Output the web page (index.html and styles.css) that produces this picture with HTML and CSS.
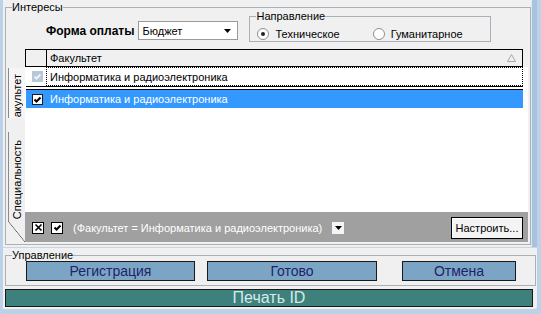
FILE: index.html
```html
<!DOCTYPE html>
<html lang="ru">
<head>
    <meta charset="UTF-8">
    <title>Интересы</title>
    <link rel="stylesheet" href="styles.css">
</head>
<body>
<div class="window">
    <div class="client">
        <div class="upper">
            <fieldset class="group interests">
                <legend>Интересы</legend>
                <div class="top-row">
                    <span class="pay-label">Форма оплаты</span>
                    <div class="combo">
                        <span>Бюджет</span>
                        <svg width="7" height="4" viewBox="0 0 7 4"><path d="M0 0h7L3.5 4z" fill="#000"/></svg>
                    </div>
                    <fieldset class="group direction">
                        <legend>Направление</legend>
                        <div class="radios">
                            <label class="radio checked"><i></i>Техническое</label>
                            <label class="radio second"><i></i>Гуманитарное</label>
                        </div>
                    </fieldset>
                </div>

                <div class="pages">
                    <div class="tabs">
                        <div class="tab tab-active"><span>Факультет</span></div>
                        <div class="tab tab-spec"><span>Специальность</span></div>
                        <div class="tab-corner"></div>
                    </div>
                    <div class="grid-panel">
                        <div class="grid">
                            <div class="grid-head">
                                <div class="ind"></div>
                                <div class="col">
                                    <span>Факультет</span>
                                    <svg width="9" height="8" viewBox="0 0 9 8"><path d="M4.5 0.5L8.5 7.5H0.5Z" fill="none" stroke="#a8a8a8"/></svg>
                                </div>
                            </div>
                            <div class="row row-current">
                                <div class="ind"><span class="check check-grey"><svg width="9" height="9" viewBox="0 0 9 9"><path d="M1.5 4.5l2 2 4-4" fill="none" stroke="#eef2f6" stroke-width="2"/></svg></span></div>
                                <div class="cell">Информатика и радиоэлектроника</div>
                            </div>
                            <div class="row row-selected">
                                <div class="ind"><span class="check"><svg width="9" height="9" viewBox="0 0 9 9"><path d="M1.5 4.5l2 2 4-4" fill="none" stroke="#000" stroke-width="2"/></svg></span></div>
                                <div class="cell">Информатика и радиоэлектроника</div>
                            </div>
                        </div>
                        <div class="filter-bar">
                            <span class="box box-x"><svg width="9" height="9" viewBox="0 0 9 9"><path d="M1.5 1.5l6 6M7.5 1.5l-6 6" stroke="#000" stroke-width="1.6"/></svg></span>
                            <span class="box box-check"><svg width="9" height="9" viewBox="0 0 9 9"><path d="M1.5 4.5l2 2 4-4" fill="none" stroke="#000" stroke-width="2"/></svg></span>
                            <span class="filter-text">(Факультет = Информатика и радиоэлектроника)</span>
                            <span class="box box-drop"><svg width="7" height="4" viewBox="0 0 7 4"><path d="M0 0h7L3.5 4z" fill="#000"/></svg></span>
                            <button class="setup-button">Настроить...</button>
                        </div>
                    </div>
                </div>
            </fieldset>
            <div class="splitter"></div>
        </div>

        <fieldset class="group control">
            <legend>Управление</legend>
            <div class="buttons">
                <button class="action-button btn-reg">Регистрация</button>
                <button class="action-button btn-done">Готово</button>
                <button class="action-button btn-cancel">Отмена</button>
            </div>
        </fieldset>

        <div class="print-bar">Печать ID</div>
    </div>
</div>
</body>
</html>
```

FILE: styles.css
```css
* {
    box-sizing: border-box;
}
body {
    margin: 0;
    width: 541px;
    height: 314px;
    overflow: hidden;
    background-color: #bcd2e8;
    font-family: "Liberation Sans", Arial, sans-serif;
    font-size: 11px;
    color: #000;
}
.window {
    display: flex;
    height: 314px;
    padding: 0 4px 5px 3px;
}
.client {
    flex: 1;
    background-color: #f0f0f0;
    display: flex;
    flex-direction: column;
    border-bottom-right-radius: 3px;
}

/* group boxes */
.group {
    margin: 0;
    padding: 0;
    border: 1px solid #a9b0b8;
    min-width: 0;
}
.group legend {
    padding: 0;
    margin-left: 6px;
    line-height: 13px;
    font-size: 11px;
}
.upper {
    display: flex;
    height: 248px;
    border-bottom: 1px solid #c8d5e2;
}
.interests {
    flex: 1;
    margin: 1px 0 0 2px;
    height: 244px;
}
.splitter {
    width: 6px;
    background-color: #a9c3dc;
    border-left: 1px solid #dfe8f1;
}

/* top row */
.top-row {
    display: flex;
    align-items: flex-start;
    margin-top: -4px;
    height: 36px;
}
.pay-label {
    margin: 14px 0 0 40px;
    font-size: 12px;
    font-weight: bold;
    line-height: 14px;
}
.combo {
    width: 100px;
    height: 19px;
    margin: 11px 0 0 4px;
    padding: 0 6px 0 3px;
    display: flex;
    align-items: center;
    justify-content: space-between;
    background-color: #fff;
    border: 1px solid #9a9a9a;
}
.direction {
    width: 242px;
    height: 32px;
    margin-left: 11px;
}
.radios {
    display: flex;
    margin-top: 5px;
}
.radio {
    display: flex;
    align-items: center;
    height: 12px;
    margin-left: 7px;
}
.radio i {
    width: 12px;
    height: 12px;
    margin-right: 6px;
    border: 1px solid #8e8f8f;
    border-radius: 50%;
    background-color: #fff;
    display: flex;
    align-items: center;
    justify-content: center;
}
.radio.checked i::after {
    content: "";
    width: 4px;
    height: 4px;
    border-radius: 50%;
    background-color: #222;
}
.radio.second {
    margin-left: 33px;
}

/* pages */
.pages {
    display: flex;
    margin-top: 3px;
    height: 193px;
}
.tabs {
    width: 19px;
    display: flex;
    flex-direction: column;
}
.tab {
    margin-left: 2px;
    width: 17px;
    display: flex;
    flex-direction: column;
    justify-content: flex-end;
    align-items: center;
    overflow: hidden;
    border-left: 1px solid #8a8a8a;
}
.tab span {
    writing-mode: vertical-rl;
    transform: rotate(180deg);
    line-height: 13px;
    white-space: nowrap;
}
.tab-active {
    margin-top: 19px;
    height: 50px;
    background-color: #f6f6f6;
}
.tab-active span {
    margin-bottom: -8px;
}
.tab-spec {
    margin-top: 14px;
    height: 89px;
    padding-bottom: 2px;
}
.tab-corner {
    margin-left: 2px;
    width: 17px;
    height: 21px;
    background: linear-gradient(to top right, transparent calc(50% - 0.6px), #555 50%, transparent calc(50% + 0.6px));
}
.grid-panel {
    width: 503px;
    display: flex;
    flex-direction: column;
}
.grid {
    flex: 1;
    background-color: #fff;
}
.grid-head {
    display: flex;
    height: 18px;
    background-color: #f0f0f0;
}
.grid-head .ind {
    width: 21px;
    border: 1px solid #000;
    border-right: none;
}
.grid-head .col {
    width: 477px;
    border: 1px solid #000;
    display: flex;
    align-items: center;
    justify-content: space-between;
    padding: 0 6px 0 3px;
}
.row {
    display: flex;
    margin-left: 1px;
    width: 497px;
}
.row .ind {
    width: 20px;
    display: flex;
    align-items: center;
    padding-left: 6px;
}
.row .cell {
    flex: 1;
    display: flex;
    align-items: center;
    padding-left: 3px;
}
.row-current {
    height: 20px;
    border-bottom: 1px solid #000;
}
.row-current .cell {
    border: 1px dotted #000;
}
.row-selected {
    margin-top: 2px;
    height: 19px;
    border-top: 1px solid #000;
    background-color: #3399ff;
    color: #fff;
}
.row-selected .cell {
    padding-left: 4px;
}
.check {
    width: 11px;
    height: 11px;
    background-color: #fff;
    border: 1px solid #1a1a1a;
    display: flex;
    align-items: center;
    justify-content: center;
}
.check-grey {
    background-color: #b6c7d8;
    border-color: #b6c7d8;
}

/* filter bar */
.filter-bar {
    height: 30px;
    background-color: #a0a0a0;
    display: flex;
    align-items: center;
    padding-top: 1px;
}
.box {
    width: 12px;
    height: 12px;
    background-color: #fff;
    border: 1px solid #000;
    display: flex;
    align-items: center;
    justify-content: center;
}
.box-x {
    margin-left: 7px;
}
.box-check {
    margin-left: 7px;
}
.filter-text {
    margin-left: 10px;
    color: #fff;
}
.box-drop {
    margin-left: 10px;
    border: none;
    background-color: #f4f4f4;
}
.setup-button {
    margin: 0 5px 0 auto;
    width: 72px;
    height: 22px;
    padding: 0;
    font-family: inherit;
    font-size: 11px;
    color: #000;
    background-color: #f4f4f4;
    border: 1px solid #000;
    box-shadow: inset 1px 1px 0 #fff;
}

/* bottom */
.control {
    margin: 1px 1px 0 2px;
    height: 37px;
}
.control legend {
    line-height: 12px;
}
.buttons {
    display: flex;
}
.action-button {
    height: 20px;
    padding: 0;
    font-family: inherit;
    font-size: 14px;
    color: #1c2469;
    background-color: #7ca4c4;
    border: 1px solid #1a1a1a;
}
.btn-reg {
    width: 169px;
    margin-left: 20px;
}
.btn-done {
    width: 170px;
    margin-left: 12px;
}
.btn-cancel {
    width: 114px;
    margin-left: 25px;
}
.print-bar {
    margin: 3px 4px 0 2px;
    height: 18px;
    line-height: 16px;
    text-align: center;
    font-size: 16px;
    color: #d6eaea;
    background-color: #3e807c;
    border: 1px solid #1a1a1a;
}
```
